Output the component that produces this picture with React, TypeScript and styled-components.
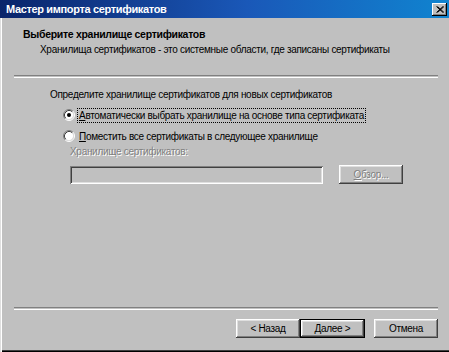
import * as React from 'react';
import styled, {createGlobalStyle} from 'styled-components';

const GlobalStyle = createGlobalStyle`
	html, body {
		margin: 0;
		padding: 0;
		background: #c0c0c0;
		overflow: hidden;
	}
`;

const face = '#c0c0c0';

const Window = styled.div`
	position: relative;
	width: 449px;
	height: 352px;
	box-sizing: border-box;
	display: flex;
	flex-direction: column;
	background: ${face};
	font-family: "Liberation Sans", Arial, sans-serif;
	font-size: 10px;
	letter-spacing: -0.3px;
	color: #000;
	box-shadow: inset 1px 0 #dfdfdf, inset 2px 0 #fff, inset 0 -1px #000, inset 0 -2px #404040;
`;

const TitleBar = styled.div`
	height: 18px;
	flex: none;
	display: flex;
	align-items: center;
	justify-content: space-between;
	padding: 0 2px 0 6px;
	background: linear-gradient(to right, #0a246a 0%, #1a58b8 55%, #1084d0 100%);
`;

const Title = styled.span`
	color: #fff;
	font-weight: bold;
	font-size: 11px;
	line-height: 13px;
	letter-spacing: -0.35px;
`;

const CloseButton = styled.div`
	width: 15px;
	height: 13px;
	box-sizing: border-box;
	display: flex;
	align-items: center;
	justify-content: center;
	background: ${face};
	box-shadow: inset -1px -1px #000, inset 1px 1px #fff, inset -2px -2px #808080;
`;

const Header = styled.div`
	height: 57px;
	flex: none;
	box-sizing: border-box;
	padding: 10px 0 0 23px;
`;

const HeaderTitle = styled.div`
	font-weight: bold;
	font-size: 10.5px;
	letter-spacing: -0.3px;
	line-height: 13px;
`;

const HeaderText = styled.div`
	line-height: 13px;
	margin: 2px 0 0 17px;
`;

const Etched = styled.div<{$left: number}>`
	flex: none;
	height: 1px;
	margin: 0 11px 0 ${p => p.$left}px;
	border-top: 1px solid #808080;
	border-bottom: 1px solid #fff;
`;

const Body = styled.div`
	flex: 1;
	padding: 10px 0 0 50px;
	display: flex;
	flex-direction: column;
`;

const Line = styled.div`
	line-height: 13px;
`;

const RadioRow = styled.label<{$first?: boolean}>`
	display: flex;
	align-items: center;
	height: 16px;
	margin: ${p => (p.$first ? '6px' : '5px')} 0 0 13px;
	gap: 2px;
`;

const RadioText = styled.span<{$focused?: boolean}>`
	line-height: 13px;
	padding: 0 1px;
	border: 1px dotted ${p => (p.$focused ? '#000' : 'transparent')};
`;

const Disabled = styled.div`
	color: #808080;
	text-shadow: 1px 1px 0 #fff;
	line-height: 13px;
	margin: 1px 0 0 20px;
`;

const InputRow = styled.div`
	display: flex;
	align-items: center;
	gap: 16px;
	margin: 7px 0 0 20px;
`;

const Field = styled.div`
	width: 253px;
	height: 18px;
	box-sizing: border-box;
	background: ${face};
	box-shadow: inset 1px 1px #808080, inset -1px -1px #fff, inset 2px 2px #404040, inset -2px -2px #dfdfdf;
`;

const Button = styled.button<{$default?: boolean; $disabled?: boolean}>`
	width: ${p => (p.$default ? 65 : 64)}px;
	height: 19px;
	padding: 0;
	box-sizing: border-box;
	border: ${p => (p.$default ? '1px solid #000' : 'none')};
	background: ${face};
	font-family: inherit;
	font-size: 10px;
	letter-spacing: -0.3px;
	line-height: 13px;
	color: ${p => (p.$disabled ? '#808080' : '#000')};
	text-shadow: ${p => (p.$disabled ? '1px 1px 0 #fff' : 'none')};
	box-shadow: inset -1px -1px #404040, inset 1px 1px #fff, inset -2px -2px #808080, inset 2px 2px #dfdfdf;
`;

const Footer = styled.div`
	flex: none;
	height: 42px;
	box-sizing: border-box;
	padding: 9px 11px 0 0;
	display: flex;
	justify-content: flex-end;
	align-items: flex-start;
`;

const Gap = styled.div`
	width: 9px;
`;

const Radio: React.FC<{checked?: boolean}> = ({checked}) => (
	<svg width="12" height="12" viewBox="0 0 12 12">
		<circle cx="6" cy="6" r="4.5" fill="#fff" />
		<path d="M2.11 9.89 A5.5 5.5 0 0 1 9.89 2.11" fill="none" stroke="#808080" />
		<path d="M9.89 2.11 A5.5 5.5 0 0 1 2.11 9.89" fill="none" stroke="#fff" />
		<path d="M2.82 9.18 A4.5 4.5 0 0 1 9.18 2.82" fill="none" stroke="#404040" />
		<path d="M9.18 2.82 A4.5 4.5 0 0 1 2.82 9.18" fill="none" stroke="#dfdfdf" />
		{checked && <circle cx="6" cy="6" r="2" fill="#000" />}
	</svg>
);

export default function App() {
	return (
		<>
			<GlobalStyle />
			<Window>
				<TitleBar>
					<Title>Мастер импорта сертификатов</Title>
					<CloseButton>
						<svg width="8" height="7" viewBox="0 0 8 7">
							<path d="M0.5 0.5 L7 6.5 M1.5 0.5 L8 6.5 M7 0.5 L0.5 6.5 M8 0.5 L1.5 6.5" stroke="#000" strokeWidth="1" />
						</svg>
					</CloseButton>
				</TitleBar>
				<Header>
					<HeaderTitle>Выберите хранилище сертификатов</HeaderTitle>
					<HeaderText>Хранилища сертификатов - это системные области, где записаны сертификаты</HeaderText>
				</Header>
				<Etched $left={14} />
				<Body>
					<Line>Определите хранилище сертификатов для новых сертификатов</Line>
					<RadioRow $first>
						<Radio checked />
						<RadioText $focused><u>А</u>втоматически выбрать хранилище на основе типа сертификата</RadioText>
					</RadioRow>
					<RadioRow>
						<Radio />
						<RadioText><u>П</u>оместить все сертификаты в следующее хранилище</RadioText>
					</RadioRow>
					<Disabled>Хранилище сертификатов:</Disabled>
					<InputRow>
						<Field />
						<Button $disabled><u>О</u>бзор...</Button>
					</InputRow>
				</Body>
				<Etched $left={14} />
				<Footer>
					<Button>&lt; Назад</Button>
					<Button $default>Далее &gt;</Button>
					<Gap />
					<Button>Отмена</Button>
				</Footer>
			</Window>
		</>
	);
}
